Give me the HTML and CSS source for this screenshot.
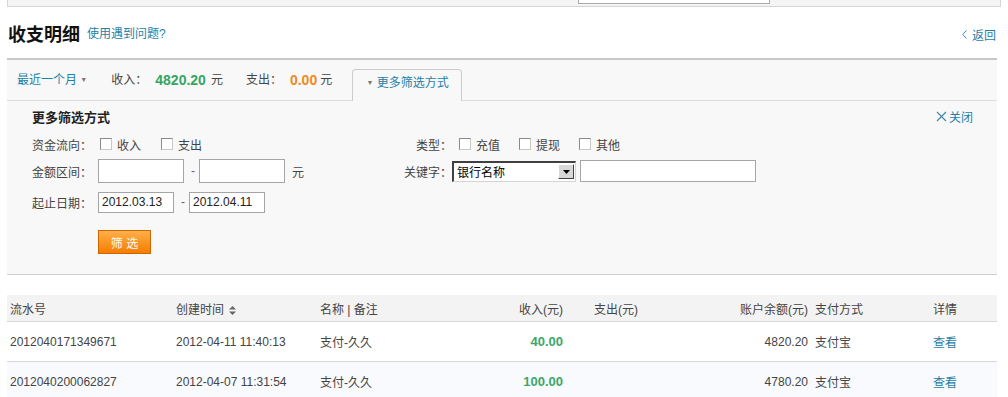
FILE: index.html
```html
<!DOCTYPE html>
<html lang="zh-CN">
<head>
    <meta charset="UTF-8">
    <title>收支明细</title>
    <link rel="stylesheet" href="styles.css">
</head>
<body>
    <div class="top-strip">
        <div class="top-box"></div>
    </div>

    <div class="page-head">
        <h2 class="page-title">收支明细</h2>
        <a class="help-link">使用遇到问题?</a>
        <a class="back-link"><svg width="5" height="9" viewBox="0 0 5 9"><path d="M4.5 0.5L0.8 4.5L4.5 8.5" stroke="#3a8aa8" stroke-width="1" fill="none"/></svg>返回</a>
    </div>

    <div class="summary">
        <div class="summary-bar">
            <a class="period">最近一个月 <span class="caret">&#9660;</span></a>
            <span class="sum-label">收入：</span>
            <span class="income">4820.20</span>
            <span class="unit">元</span>
            <span class="sum-label out-label">支出：</span>
            <span class="outcome">0.00</span>
            <span class="unit">元</span>
            <div class="more-tab"><span class="caret">&#9660;</span> 更多筛选方式</div>
        </div>

        <!-- 更多筛选方式 -->
        <div class="filter-panel">
            <div class="filter-head">
                <h3>更多筛选方式</h3>
                <a class="close-link"><svg width="11" height="11" viewBox="0 0 11 11"><path d="M1 1L10 10M10 1L1 10" stroke="#3a8aa8" stroke-width="1.1" fill="none"/></svg>关闭</a>
            </div>

            <div class="filter-row row-check">
                <div class="filter-left">
                    <span class="f-label">资金流向：</span>
                    <label class="check"><input type="checkbox">收入</label>
                    <label class="check"><input type="checkbox">支出</label>
                </div>
                <div class="filter-right">
                    <span class="r-label">类型：</span>
                    <label class="check"><input type="checkbox">充值</label>
                    <label class="check"><input type="checkbox">提现</label>
                    <label class="check"><input type="checkbox">其他</label>
                </div>
            </div>

            <div class="filter-row row-amount">
                <div class="filter-left">
                    <span class="f-label">金额区间：</span>
                    <input class="txt amount" type="text">
                    <span class="dash">-</span>
                    <input class="txt amount" type="text">
                    <span class="yuan">元</span>
                </div>
                <div class="filter-right">
                    <span class="r-label">关键字：</span>
                    <div class="fake-select">
                        <span>银行名称</span>
                        <span class="sel-btn"><svg width="7" height="4" viewBox="0 0 7 4"><path d="M0 0H7L3.5 4Z" fill="#000"/></svg></span>
                    </div>
                    <input class="txt keyword" type="text">
                </div>
            </div>

            <div class="filter-row row-date">
                <div class="filter-left">
                    <span class="f-label">起止日期：</span>
                    <input class="txt date" type="text" value="2012.03.13">
                    <span class="dash">-</span>
                    <input class="txt date" type="text" value="2012.04.11">
                </div>
            </div>

            <button class="btn-filter" type="button">筛 选</button>
        </div>
    </div>

    <table class="records">
        <thead>
            <tr>
                <th class="c-no">流水号</th>
                <th class="c-time">创建时间 <svg class="sort" width="7" height="9" viewBox="0 0 7 9"><path d="M3.5 0L7 3.5H0Z M0 5.5H7L3.5 9Z" fill="#666"/></svg></th>
                <th class="c-name">名称 | 备注</th>
                <th class="c-in">收入(元)</th>
                <th class="c-out">支出(元)</th>
                <th class="c-bal">账户余额(元)</th>
                <th class="c-pay">支付方式</th>
                <th class="c-det">详情</th>
            </tr>
        </thead>
        <tbody>
            <tr>
                <td class="c-no">2012040171349671</td>
                <td class="c-time">2012-04-11 11:40:13</td>
                <td class="c-name">支付-久久</td>
                <td class="c-in amount-in">40.00</td>
                <td class="c-out"></td>
                <td class="c-bal">4820.20</td>
                <td class="c-pay">支付宝</td>
                <td class="c-det"><a>查看</a></td>
            </tr>
            <tr class="alt">
                <td class="c-no">2012040200062827</td>
                <td class="c-time">2012-04-07 11:31:54</td>
                <td class="c-name">支付-久久</td>
                <td class="c-in amount-in">100.00</td>
                <td class="c-out"></td>
                <td class="c-bal">4780.20</td>
                <td class="c-pay">支付宝</td>
                <td class="c-det"><a>查看</a></td>
            </tr>
        </tbody>
    </table>
</body>
</html>
```

FILE: styles.css
```css
body {
    margin: 0;
    font-family: "Liberation Sans", "Noto Sans CJK SC", sans-serif;
    font-size: 12px;
    color: #333;
    background-color: #fff;
}

a {
    color: #1f80a6;
    cursor: pointer;
    text-decoration: none;
}

.top-strip {
    margin: 0 7px 0 7px;
    height: 6px;
    background-color: #f4f4f4;
    border: 1px solid #d4d4d4;
    border-top: none;
}

.top-box {
    margin-left: 570px;
    width: 190px;
    height: 3px;
    background-color: #fff;
    border: 1px solid #aaa;
    border-top: none;
}

.page-head {
    display: flex;
    align-items: center;
    height: 51px;
    padding: 0 12px 0 8px;
}

.page-title {
    margin: 0;
    font-size: 18px;
    font-weight: bold;
    color: #111;
}

.help-link {
    margin-left: 7px;
    margin-top: -1px;
    font-size: 12px;
}

.back-link {
    margin-left: auto;
    margin-top: 4px;
    display: flex;
    align-items: center;
    gap: 5px;
    font-size: 12px;
}

.summary {
    margin: 0 11px 0 7px;
    border-top: 2px solid #c8c8c8;
    border-bottom: 1px solid #cfcfcf;
    background-color: #f8f8f8;
}

.summary-bar {
    display: flex;
    align-items: flex-end;
    height: 40px;
    padding-left: 10px;
    border-bottom: 1px solid #dcdcdc;
    line-height: 20px;
}

.summary-bar > * {
    margin-bottom: 10px;
}

.period {
    margin-right: 24px;
}

.caret {
    font-size: 7px;
    color: #777;
    vertical-align: 2px;
}

.sum-label {
    color: #444;
}

.income,
.outcome {
    font-size: 14px;
    font-weight: bold;
    margin: 0 5px 10px 8px;
}

.income {
    color: #35a564;
}

.outcome {
    color: #f08a1c;
    margin-right: 3px;
}

.out-label {
    margin-left: 23px;
}

.unit {
    color: #444;
}

.more-tab {
    margin: 0 0 -1px 20px;
    width: 110px;
    height: 32px;
    line-height: 26px;
    padding-left: 1px;
    background-color: #f8f8f8;
    border: 1px solid #ccc;
    border-bottom: none;
    border-radius: 4px 4px 0 0;
    color: #1f80a6;
    text-align: center;
    box-sizing: border-box;
}

.filter-panel {
    padding: 5px 0 20px 25px;
}

.filter-head {
    display: flex;
    align-items: center;
    height: 20px;
    padding-right: 24px;
}

.filter-head h3 {
    margin: 0;
    font-size: 13px;
    font-weight: bold;
    color: #222;
}

.close-link {
    margin-left: auto;
    display: flex;
    align-items: center;
    gap: 2px;
}

.filter-row {
    display: flex;
    align-items: center;
}

.row-check {
    height: 22px;
    margin-top: 7px;
}

.row-amount {
    height: 28px;
    margin-top: 2px;
}

.row-date {
    height: 28px;
    margin-top: 3px;
}

.filter-left {
    display: flex;
    align-items: center;
    width: 370px;
}

.filter-right {
    display: flex;
    align-items: center;
}

.f-label {
    width: 66px;
    color: #444;
}

.r-label {
    width: 50px;
    text-align: right;
    color: #444;
}

.check {
    display: flex;
    align-items: center;
    color: #444;
}

.filter-left .check {
    margin-left: 2px;
    margin-right: 18px;
}

.filter-right .check {
    margin-left: 2px;
    margin-right: 17px;
}

.filter-right .r-label + .check {
    margin-left: 7px;
}

.check input {
    appearance: none;
    width: 12px;
    height: 12px;
    margin: 0 5px 0 0;
    background-color: #fff;
    border: 1px solid #8a8a8a;
    border-right-color: #c8c8c8;
    border-bottom-color: #c8c8c8;
}

.txt {
    height: 22px;
    padding: 0 3px;
    border: 1px solid #a5a5a5;
    background-color: #fff;
    font-family: inherit;
    font-size: 12px;
    color: #222;
    box-sizing: border-box;
}

.amount {
    width: 86px;
    height: 24px;
}

.date {
    width: 76px;
    height: 21px;
}

.dash {
    margin: 0 4px 0 7px;
    color: #666;
}

.yuan {
    margin-left: 7px;
    color: #444;
}

.fake-select {
    display: flex;
    align-items: center;
    justify-content: space-between;
    width: 124px;
    height: 21px;
    padding-left: 3px;
    background-color: #fff;
    border: 1px solid #d4d4d4;
    border-left: 2px solid #404040;
    border-top: 2px solid #404040;
    box-sizing: border-box;
    color: #000;
    font-size: 12px;
}

.sel-btn {
    display: flex;
    align-items: center;
    justify-content: center;
    width: 16px;
    height: 15px;
    margin-right: 1px;
    background-color: #d8d8d8;
    border: 1px solid #fff;
    border-right-color: #404040;
    border-bottom-color: #404040;
    box-sizing: border-box;
}

.keyword {
    width: 176px;
    height: 22px;
    margin-left: 4px;
}

.btn-filter {
    margin: 14px 0 0 66px;
    width: 53px;
    height: 24px;
    padding: 0;
    border: 1px solid #d06400;
    background: linear-gradient(#ffb04a, #f57d00);
    color: #fff;
    font-family: inherit;
    font-size: 12px;
    cursor: pointer;
}

.records {
    margin: 20px 11px 0 7px;
    width: 990px;
    border-collapse: collapse;
    table-layout: fixed;
}

.records th,
.records td {
    padding: 0 3px;
    text-align: left;
    font-weight: normal;
    white-space: nowrap;
    border-bottom: 1px solid #d8d8d8;
}

.records th {
    height: 26px;
    background-color: #f3f3f3;
    color: #444;
}

.records td {
    height: 39px;
    color: #444;
}

.records tr.alt td {
    background-color: #f8fafd;
}

.sort {
    vertical-align: -1px;
    margin-left: 2px;
}

.c-no { width: 160px; }
.c-time { width: 138px; }
.c-name { width: 154px; }
.records .c-in { width: 83px; text-align: right; padding-right: 28px; }
.c-out { width: 103px; }
.records .c-bal { width: 105px; text-align: right; padding-right: 4px; }
.c-pay { width: 112px; }
.c-det { width: auto; }

.records .amount-in {
    font-size: 13px;
    font-weight: bold;
    color: #3aa866;
}
```
